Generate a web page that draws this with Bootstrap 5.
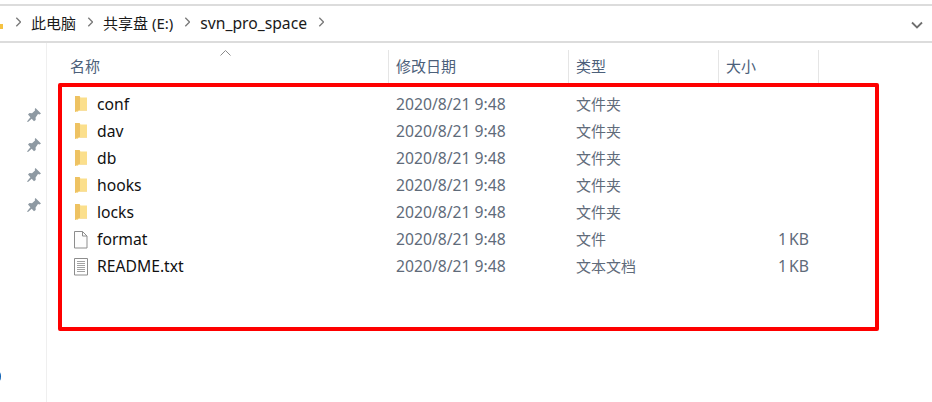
<!DOCTYPE html>
<html lang="zh-CN">
<head>
    <meta charset="UTF-8">
    <meta name="viewport" content="width=device-width, initial-scale=1.0">
    <link rel="stylesheet" href="https://cdn.jsdelivr.net/npm/bootstrap@5.3.0/dist/css/bootstrap.min.css">
    <title>svn_pro_space</title>
    <style>
        html, body { height: 100%; }
        body { font-family: "Noto Sans", "Noto Sans CJK SC", sans-serif; font-size: 15.7px; color: #1a1a1a; background: #fff; overflow: hidden; }
        .zh { font-size: 15px; }
        .shell { width: 932px; height: 402px; padding-top: 4px; }
        .addr-bar { height: 39px; border-top: 2px solid #dcdcdc; border-bottom: 2px solid #dcdcdc; padding-left: 15px; }
        .crumb { margin-right: 11px; white-space: nowrap; }
        .crumb-sep { width: 6px; height: 10px; margin-right: 10px; flex: none; margin-top: -3px; }
        .home-tip { position: absolute; left: 0; top: 24px; width: 3px; height: 5px; background: #f5c242; }
        .drop-arrow { margin-left: auto; margin-right: 9px; margin-top: 2px; }
        .body-area { height: 359px; }
        .side-pane { width: 47px; height: 100%; border-right: 1px solid #efefef; padding-top: 57px; padding-left: 27px; flex: none; }
        .pin-icon { display: block; height: 30px; }
        .side-dot { position: absolute; left: -5px; top: 371px; width: 6px; height: 11px; border-radius: 50%; background: #0a5fb4; }
        .file-pane { padding-top: 7px; }
        .head-row { height: 33px; color: #4c607a; }
        .sort-arrow { position: absolute; left: 220px; top: 50px; }
        .head-cell { height: 100%; padding-left: 7px; border-right: 1px solid #e5e5e5; padding-top: 6px; line-height: 20px; }
        .c-name { width: 342px; padding-left: 23px; }
        .c-date { width: 180px; }
        .c-type { width: 150px; }
        .c-size { width: 100px; }
        .file-row { height: 27px; line-height: 27px; }
        .first-row { margin-top: 8px; }
        .file-row .c-name { display: flex; align-items: center; gap: 8px; padding-left: 26px; color: #111; }
        .file-row .c-date, .file-row .c-type { padding-left: 7px; color: #5f6b7a; }
        .file-row .c-size { padding-right: 10px; color: #5f6b7a; text-align: right; word-spacing: -2px; }
        .file-glyph { width: 16px; height: 18px; flex: none; }
        .red-frame { position: absolute; left: 58px; top: 83px; width: 821px; height: 248px; border: 4px solid #fe0000; border-radius: 2px; pointer-events: none; }
    </style>
</head>
<body>
<div class="shell position-relative">

    <!-- address bar -->
    <div class="addr-bar d-flex align-items-center">
        <svg class="crumb-sep" viewBox="0 0 6 10"><path d="M1.3.8L5.5 5 1.3 9.2" fill="none" stroke="#7a7a7a" stroke-width="1.3"/></svg>
        <span class="crumb zh">此电脑</span>
        <svg class="crumb-sep" viewBox="0 0 6 10"><path d="M1.3.8L5.5 5 1.3 9.2" fill="none" stroke="#7a7a7a" stroke-width="1.3"/></svg>
        <span class="crumb zh">共享盘 (E:)</span>
        <svg class="crumb-sep" viewBox="0 0 6 10"><path d="M1.3.8L5.5 5 1.3 9.2" fill="none" stroke="#7a7a7a" stroke-width="1.3"/></svg>
        <span class="crumb">svn_pro_space</span>
        <svg class="crumb-sep" viewBox="0 0 6 10"><path d="M1.3.8L5.5 5 1.3 9.2" fill="none" stroke="#7a7a7a" stroke-width="1.3"/></svg>
        <svg class="drop-arrow" width="12" height="8" viewBox="0 0 12 8"><path d="M1 1.5l5 5 5-5" fill="none" stroke="#6f6f6f" stroke-width="1.8"/></svg>
    </div>
    <div class="home-tip"></div>

    <div class="body-area d-flex">
        <!-- quick access pins -->
        <div class="side-pane">
            <svg class="pin-icon" width="14" height="30" viewBox="0 0 14 30"><use href="#pin"/></svg>
            <svg class="pin-icon" width="14" height="30" viewBox="0 0 14 30"><use href="#pin"/></svg>
            <svg class="pin-icon" width="14" height="30" viewBox="0 0 14 30"><use href="#pin"/></svg>
            <svg class="pin-icon" width="14" height="30" viewBox="0 0 14 30"><use href="#pin"/></svg>
        </div>

        <!-- file list -->
        <div class="file-pane flex-grow-1">
            <div class="head-row d-flex zh">
                <div class="head-cell c-name">名称</div>
                <div class="head-cell c-date">修改日期</div>
                <div class="head-cell c-type">类型</div>
                <div class="head-cell c-size">大小</div>
            </div>
            <div id="fileRows"></div>
        </div>
    </div>

    <svg class="sort-arrow" width="11" height="6" viewBox="0 0 11 6"><path d="M.5 5.5l5-5 5 5" fill="none" stroke="#8a8a8a"/></svg>
    <div class="side-dot"></div>
    <div class="red-frame"></div>
</div>

<svg width="0" height="0" class="position-absolute">
    <defs>
        <g id="pin">
            <path transform="translate(0 8)" d="M8.5 0L14 5.5 12.5 6.6 11 6 8.6 9.5 8.7 12 7 13.2 4.7 10.7 1 14 0 13.4 3.4 9.2 1 6.6 2.5 5 5 5.2 8 2.5 7.8 1z" fill="#8f9aa3"/>
        </g>
        <g id="folder">
            <path d="M2 0h4.5l1 1.5H14v13H6.5L2 16z" fill="#fbdf8c"/>
            <path d="M2 0h4.5l.5 1v12.8L2 16z" fill="#eec262"/>
            <path d="M2 16l4.7-1.8H14v.6H6.9z" fill="#f3d27c"/>
        </g>
        <g id="blank">
            <path d="M1.5 .5h8l4.5 4.5v12H1.5z" fill="#fdfdfd" stroke="#8d8d8d"/>
            <path d="M9.5 .5V5H14" fill="none" stroke="#8d8d8d"/>
        </g>
        <g id="text">
            <path d="M1.5 .5h13v16.5h-13z" fill="#fff" stroke="#8d8d8d"/>
            <path d="M4 3.5h8M4 5.5h8M4 7.5h8M4 9.5h8M4 11.5h8M4 13.5h8" stroke="#a3a3a3"/>
        </g>
    </defs>
</svg>

<script>
    // file list data
    const files = [
        ["conf", "文件夹", "", "folder"],
        ["dav", "文件夹", "", "folder"],
        ["db", "文件夹", "", "folder"],
        ["hooks", "文件夹", "", "folder"],
        ["locks", "文件夹", "", "folder"],
        ["format", "文件", "1 KB", "blank"],
        ["README.txt", "文本文档", "1 KB", "text"]
    ];

    document.getElementById("fileRows").innerHTML = files.map((f, i) => `
        <div class="file-row d-flex${i === 0 ? " first-row" : ""}">
            <div class="c-name"><svg class="file-glyph" viewBox="0 0 16 18"><use href="#${f[3]}"/></svg><span>${f[0]}</span></div>
            <div class="c-date">2020/8/21 9:48</div>
            <div class="c-type zh">${f[1]}</div>
            <div class="c-size">${f[2]}</div>
        </div>`).join("");
</script>
<script src="https://cdn.jsdelivr.net/npm/bootstrap@5.3.0/dist/js/bootstrap.bundle.min.js"></script>
</body>
</html>
